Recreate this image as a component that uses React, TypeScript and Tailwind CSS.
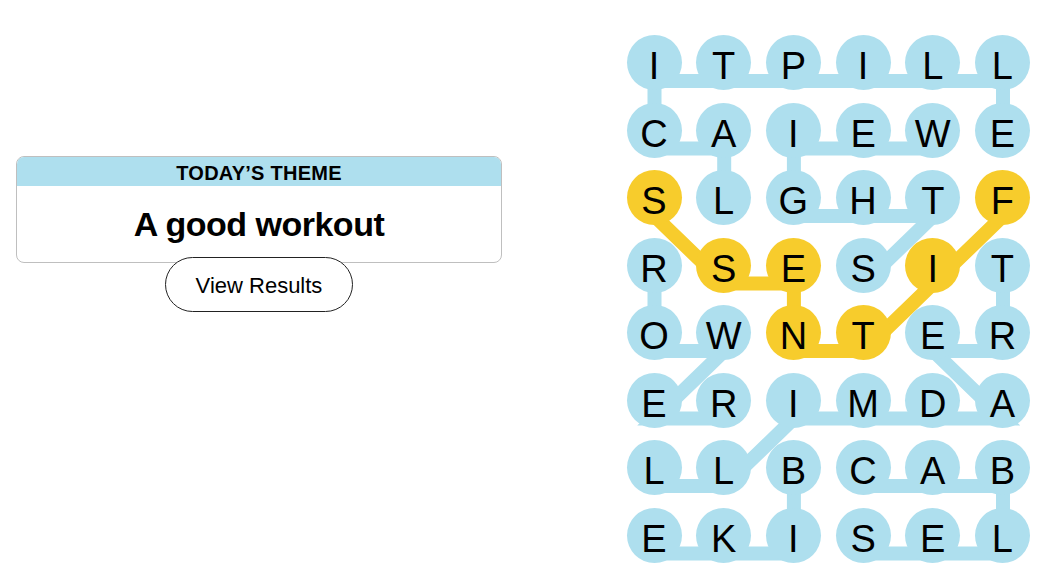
import React from 'react';

const BLUE = '#aedfee';
const YELLOW = '#f7cc2c';

const rows = [
    'ITPILL',
    'CAIEWE',
    'SLGHTF',
    'RSESIT',
    'OWNTER',
    'ERIMDA',
    'LLBCAB',
    'EKISEL',
];

type Pt = [number, number];

const words: { path: Pt[]; spangram?: boolean }[] = [
    { path: [[1, 5], [0, 5], [0, 4], [0, 3], [0, 2], [0, 1], [0, 0], [1, 0], [1, 1], [2, 1]] },
    { path: [[1, 4], [1, 3], [1, 2], [2, 2], [2, 3], [2, 4], [3, 3]] },
    { path: [[3, 0], [4, 0], [4, 1], [5, 0], [5, 1]] },
    { path: [[3, 5], [4, 5], [4, 4], [5, 5], [5, 4], [5, 3], [5, 2], [6, 1], [6, 0]] },
    { path: [[6, 2], [7, 2], [7, 1], [7, 0]] },
    { path: [[6, 3], [6, 4], [6, 5], [7, 5], [7, 4], [7, 3]] },
    { path: [[2, 5], [3, 4], [4, 3], [4, 2], [3, 2], [3, 1], [2, 0]], spangram: true },
];

const spangramCells = new Set(words.filter(w => w.spangram).flatMap(w => w.path.map(([r, c]) => `${r}-${c}`)));

// circle centres inside the board, lines sit a bit lower than the centres
const cx = (c: number) => 27.5 + c * 69.7;
const cy = (r: number) => 27.5 + r * 67.5 + 18.5;

const Board = () => {
    return (
        <div className="relative">
            <svg className="absolute inset-0" width="404" height="563">
                {words.map((w, i) => (
                    <polyline
                        key={i}
                        points={w.path.map(([r, c]) => `${cx(c)},${cy(r)}`).join(' ')}
                        fill="none"
                        stroke={w.spangram ? YELLOW : BLUE}
                        strokeWidth={14}
                    />
                ))}
            </svg>
            <div className="relative grid grid-cols-[repeat(6,55px)] gap-x-[14.7px] gap-y-[12.5px]">
                {rows.map((row, r) =>
                    row.split('').map((ch, c) => (
                        <div
                            key={`${r}-${c}`}
                            className={
                                spangramCells.has(`${r}-${c}`)
                                    ? 'w-[55px] h-[55px] rounded-full bg-[#f7cc2c] flex items-center justify-center pt-[7px] text-[38px] leading-none text-black'
                                    : 'w-[55px] h-[55px] rounded-full bg-[#aedfee] flex items-center justify-center pt-[7px] text-[38px] leading-none text-black'
                            }
                        >
                            {ch}
                        </div>
                    ))
                )}
            </div>
        </div>
    );
};

const App = () => {
    return (
        <div className="w-[1042px] h-[586px] bg-white flex font-['Liberation_Sans',Arial,sans-serif] text-black overflow-hidden">
            <div className="w-[502px] pl-4 pt-[156px] flex flex-col items-center">
                <div className="w-[486px] border border-[#bfbfbf] rounded-lg overflow-hidden">
                    <div className="h-[29px] bg-[#aedfee] flex items-center justify-center text-[20px] font-bold tracking-[0.25px] leading-none pt-[3px]">
                        TODAY’S THEME
                    </div>
                    <div className="h-[76px] flex items-center justify-center text-[34px] font-bold tracking-[-0.5px] leading-none pt-[1px] pb-[1px]">
                        A good workout
                    </div>
                </div>
                <button className="relative -mt-[6px] w-[188px] h-[55px] rounded-full border border-[#222] bg-white text-[22px] leading-none pt-[2px]">
                    View Results
                </button>
            </div>
            <div className="ml-[124.5px] pt-[35px]">
                <Board />
            </div>
        </div>
    );
};

export default App;
